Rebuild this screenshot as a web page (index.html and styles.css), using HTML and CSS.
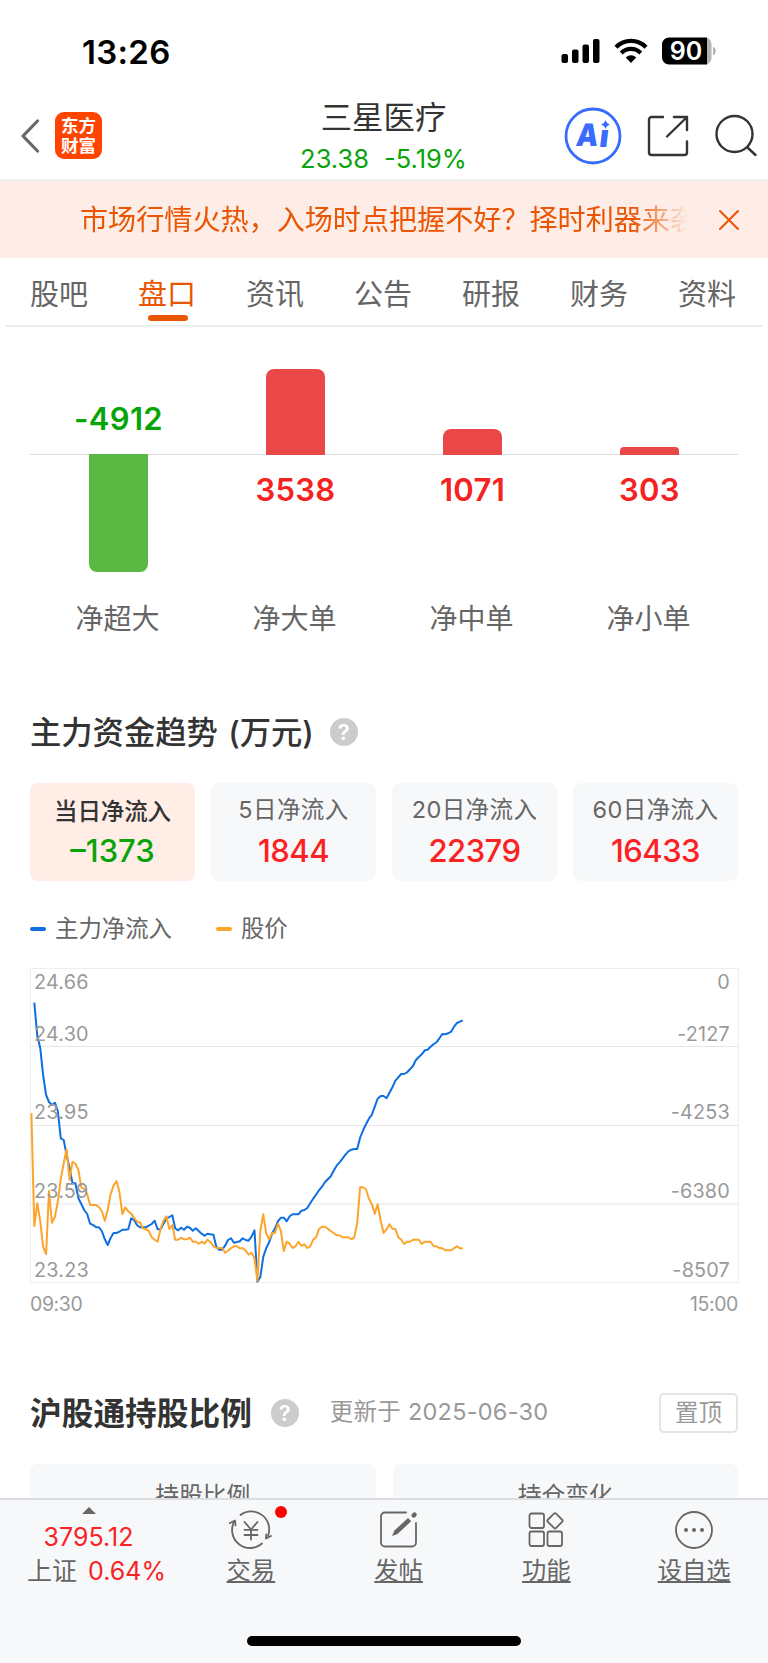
FILE: index.html
```html
<!DOCTYPE html>
<html lang="zh-CN">
  <head>
    <meta charset="UTF-8" />
    <title>三星医疗</title>
    <link rel="stylesheet" href="styles.css" />
  </head>
  <body>
    <div class="statusbar">
      <span class="time">13:26</span>
      <svg class="status-icons" width="156" height="28" viewBox="0 0 156 28">
        <rect x="1.5" y="17" width="6.5" height="9" rx="2" />
        <rect x="12" y="12.5" width="6.5" height="13.5" rx="2" />
        <rect x="22.5" y="7.5" width="6.5" height="18.5" rx="2" />
        <rect x="33" y="2" width="6.5" height="24" rx="2" />
        <path d="M56 10.2a21 21 0 0 1 30 0" fill="none" stroke="#000" stroke-width="4.2" />
        <path d="M61.2 15.9a13.8 13.8 0 0 1 19.6 0" fill="none" stroke="#000" stroke-width="4.2" />
        <path d="M65.8 20.5a7.4 7.4 0 0 1 10.4 0L71 26z" />
        <path d="M109 0.5h38v27h-38a7 7 0 0 1-7-7v-13a7 7 0 0 1 7-7z" />
        <path d="M147 0.5a8 8 0 0 1 4.5 7v13a8 8 0 0 1-4.5 7z" fill="#b3b3b3" />
        <path d="M153 9.5a5 5 0 0 1 0 9z" fill="#b3b3b3" />
        <text class="battery-text" x="126" y="23" text-anchor="middle">90</text>
      </svg>
    </div>

    <header class="header">
      <div class="header-left">
        <svg width="20" height="36" viewBox="0 0 20 36" fill="none" stroke="#666" stroke-width="3.2" stroke-linecap="round" stroke-linejoin="round">
          <path d="M17.5 3L3 18l14.5 15" />
        </svg>
        <div class="logo">东方<br />财富</div>
      </div>
      <div class="stock">
        <div class="stock-name">三星医疗</div>
        <div class="stock-price"><span>23.38</span><span>-5.19%</span></div>
      </div>
      <div class="header-right">
        <svg width="58" height="58" viewBox="0 0 58 58">
          <circle cx="29" cy="29" r="27" fill="none" stroke="#3a6bff" stroke-width="2.8" />
          <g class="ai" transform="translate(5 0) skewX(-7)">
            <text x="11" y="39.5" textLength="22" lengthAdjust="spacingAndGlyphs">A</text>
            <text x="34.5" y="40.5">ı</text>
          </g>
          <path d="M41.5 13q1 3.500 4.500 4.500q-3.500 1-4.500 4.500q-1-3.500-4.500-4.500q3.500-1 4.500-4.500z" fill="#3a6bff" />
        </svg>
        <svg width="42" height="42" viewBox="0 0 42 42" fill="none" stroke="#333" stroke-width="2.4" stroke-linecap="round" stroke-linejoin="round">
          <path d="M16 2H4.500A2.500 2.500 0 0 0 2 4.500v33A2.500 2.500 0 0 0 4.500 40h33a2.500 2.500 0 0 0 2.500-2.500V26.500" />
          <path d="M27 2h13v13M40 2L20 21.500" />
        </svg>
        <svg width="44" height="44" viewBox="0 0 44 44" fill="none" stroke="#333" stroke-width="2.4" stroke-linecap="round">
          <circle cx="20.500" cy="20" r="18" />
          <path d="M34 34l7.500 7" />
        </svg>
      </div>
    </header>

    <div class="notice">
      <div class="notice-text">市场行情火热，入场时点把握不好？择时利器来袭</div>
      <svg width="20" height="20" viewBox="0 0 20 20" stroke="#ea5504" stroke-width="2" stroke-linecap="round">
        <path d="M1 1l18 18M19 1L1 19" />
      </svg>
    </div>

    <nav class="tabs">
      <a>股吧</a>
      <a class="active">盘口</a>
      <a>资讯</a>
      <a>公告</a>
      <a>研报</a>
      <a>财务</a>
      <a>资料</a>
    </nav>

    <main>
      <section class="orders">
        <div class="order green">
          <div class="up"><b>-4912</b></div>
          <div class="down"><i style="height: 118px"></i></div>
          <span>净超大</span>
        </div>
        <div class="order red">
          <div class="up"><i style="height: 86px"></i></div>
          <div class="down"><b>3538</b></div>
          <span>净大单</span>
        </div>
        <div class="order red">
          <div class="up"><i style="height: 26px"></i></div>
          <div class="down"><b>1071</b></div>
          <span>净中单</span>
        </div>
        <div class="order red small">
          <div class="up"><i style="height: 8px"></i></div>
          <div class="down"><b>303</b></div>
          <span>净小单</span>
        </div>
      </section>

      <section class="trend">
        <div class="title-row">
          <h2 class="trend-title">主力资金趋势 (万元)</h2>
          <span class="help">?</span>
        </div>

        <div class="cards">
          <div class="card selected">
            <span>当日净流入</span>
            <b>–1373</b>
          </div>
          <div class="card">
            <span>5日净流入</span>
            <b>1844</b>
          </div>
          <div class="card">
            <span>20日净流入</span>
            <b>22379</b>
          </div>
          <div class="card">
            <span>60日净流入</span>
            <b>16433</b>
          </div>
        </div>

        <div class="legend">
          <span class="flow">主力净流入</span>
          <span class="price">股价</span>
        </div>

        <svg class="chart" width="709" height="315" viewBox="0 0 709 315">
          <rect class="frame" x="0.5" y="0.5" width="708" height="314" />
          <path class="grid" d="M0 78.500h709M0 157.500h709M0 236h709" />
          <polyline id="flowLine" class="line" stroke="#0f6fe0" />
          <polyline id="priceLine" class="line" stroke="#fca42c" />
          <g class="axis">
            <text x="4" y="21">24.66</text>
            <text x="4" y="72.500">24.30</text>
            <text x="4" y="151.200">23.95</text>
            <text x="4" y="230">23.59</text>
            <text x="4" y="308.500">23.23</text>
          </g>
          <g class="axis" text-anchor="end">
            <text x="700" y="21">0</text>
            <text x="700" y="72.500">-2127</text>
            <text x="700" y="151.200">-4253</text>
            <text x="700" y="230">-6380</text>
            <text x="700" y="308.500">-8507</text>
          </g>
        </svg>
        <div class="hours"><span>09:30</span><span>15:00</span></div>
      </section>

      <section class="holding">
        <div class="title-row">
          <h2>沪股通持股比例</h2>
          <span class="help">?</span>
          <span class="updated">更新于 2025-06-30</span>
          <button class="pin">置顶</button>
        </div>
        <div class="panels">
          <div>持股比例</div>
          <div>持仓变化</div>
        </div>
      </section>
    </main>

    <footer class="toolbar">
      <div class="index">
        <i class="arrow"></i>
        <div class="points">3795.12</div>
        <div class="change">上证<em>0.64%</em></div>
      </div>
      <a class="tool">
        <svg width="44" height="40" viewBox="0 0 44 40">
          <path d="M11.500 5a18 18 0 0 1 27.500 21M33 33.500A18 18 0 0 1 5.500 11" />
          <path d="M0.500 13.200l5.500-2.700 0.500 5M42 26l-5 2.500 0.300-4" />
          <path d="M15.500 12l6.500 7.500 6.500-7.500M22 19.500v10M15.500 19.800h13M15.500 25h13" />
        </svg>
        <span class="dot"></span>
        <span>交易</span>
      </a>
      <a class="tool">
        <svg width="44" height="40" viewBox="0 0 44 40">
          <path d="M29 2.500H8a4 4 0 0 0-4 4v26a4 4 0 0 0 4 4h27a4 4 0 0 0 4-4V13" />
          <path class="solid" d="M15 26l2.500-5.500 13.500-12.500 3.200 3.200-13.700 12.800z" />
          <path d="M36.700 5.500l0.800-0.800" stroke-width="4.5" />
        </svg>
        <span>发帖</span>
      </a>
      <a class="tool">
        <svg width="44" height="40" viewBox="0 0 44 40">
          <rect x="5.500" y="3.500" width="14.500" height="14.500" rx="2" />
          <rect x="5.500" y="21.500" width="14.500" height="14.500" rx="2" />
          <rect x="23.500" y="21.500" width="14.500" height="14.500" rx="2" />
          <rect x="25.200" y="5" width="11.600" height="11.600" rx="1.500" transform="rotate(45 31 10.800)" />
        </svg>
        <span>功能</span>
      </a>
      <a class="tool">
        <svg width="44" height="40" viewBox="0 0 44 40">
          <circle cx="22" cy="20" r="18" />
          <g class="solid">
            <circle cx="14" cy="20" r="2" />
            <circle cx="22" cy="20" r="2" />
            <circle cx="30" cy="20" r="2" />
          </g>
        </svg>
        <span>设自选</span>
      </a>
      <div class="home"></div>
    </footer>

    <script>
      // one value per minute, the frame runs from 39 (top) to 984 (bottom)
      const flow = [
        143, 243, 278, 360, 420, 441, 450, 443, 468, 550, 555, 600, 640, 685,
        685, 730, 747, 765, 777, 806, 810, 817, 817, 828, 853, 870, 849, 834,
        834, 830, 824, 824, 823, 790, 795, 811, 817, 817, 817, 812, 807, 797,
        823, 823, 806, 791, 786, 781, 820, 826, 818, 824, 815, 818, 827, 820,
        828, 836, 842, 836, 838, 839, 875, 884, 884, 872, 855, 850, 863, 861,
        859, 850, 855, 857, 845, 826, 980, 966, 905, 880, 862, 836, 820, 799,
        788, 788, 799, 784, 778, 778, 778, 767, 765, 759, 745, 731, 719, 706,
        695, 682, 673, 664, 647, 632, 622, 611, 599, 589, 584, 582, 582, 548,
        526, 508, 491, 479, 455, 431, 423, 423, 430, 413, 397, 377, 367, 357,
        357, 352, 343, 333, 315, 306, 298, 286, 284, 275, 268, 262, 250, 237,
        238, 235, 230, 215, 204, 200, 196,
      ];
      const price = [
        475, 813, 745, 797, 875, 897, 708, 803, 785, 740, 672, 625, 583, 675,
        620, 626, 645, 697, 702, 718, 750, 750, 750, 756, 768, 797, 765, 718,
        692, 678, 712, 777, 757, 769, 776, 788, 801, 802, 820, 823, 828, 847,
        854, 860, 822, 797, 784, 822, 810, 854, 854, 848, 853, 853, 848, 860,
        860, 866, 860, 866, 854, 861, 873, 879, 879, 879, 893, 887, 880, 874,
        874, 880, 880, 887, 899, 893, 910, 977, 828, 778, 835, 853, 834, 834,
        806, 828, 888, 860, 866, 879, 874, 860, 873, 868, 879, 874, 854, 847,
        822, 815, 815, 821, 828, 834, 841, 841, 847, 847, 847, 853, 847, 805,
        697, 697, 703, 731, 748, 776, 748, 797, 834, 823, 808, 821, 822, 847,
        854, 867, 860, 860, 854, 854, 854, 867, 860, 860, 860, 873, 874, 879,
        880, 886, 886, 886, 880, 874, 880, 880,
      ];

      function draw(id, data, start) {
        const points = data.map((v, i) => {
          const x = 1.4 + (i + start) * 2.935;
          const y = (v - 39) / 3;
          return x.toFixed(1) + "," + y.toFixed(1);
        });
        document.getElementById(id).setAttribute("points", points.join(" "));
      }

      draw("flowLine", flow, 1);
      draw("priceLine", price, 0);
    </script>
  </body>
</html>
```
FILE: styles.css
```css
* {
  box-sizing: border-box;
}
body {
  margin: 0;
  width: 768px;
  height: 1663px;
  overflow: hidden;
  display: flex;
  flex-direction: column;
  background: #fff;
  color: #333;
  font-family: Inter, "Noto Sans CJK SC", sans-serif;
}
.statusbar {
  height: 92px;
  padding: 37px 52px 0 82px;
  display: flex;
  justify-content: space-between;
}
.time {
  font-size: 33px;
  font-weight: 600;
  line-height: 30px;
  color: #000;
  letter-spacing: 0.3px;
}
.battery-text {
  font-size: 25px;
  font-weight: 600;
  fill: #fff;
}
.header {
  height: 89px;
  padding: 0 10px 0 20px;
  border-bottom: 2px solid #eee;
  display: grid;
  grid-template-columns: 210px 1fr 210px;
  align-items: center;
}
.header-left {
  display: flex;
  align-items: center;
  gap: 15px;
}
.logo {
  width: 47px;
  height: 47px;
  border-radius: 9px;
  background: #ff4400;
  color: #fff;
  font-size: 17.5px;
  font-weight: 700;
  line-height: 19.5px;
  text-align: center;
  padding-top: 4px;
}
.stock {
  text-align: center;
  padding: 5px 11px 0 0;
}
.stock-name {
  font-size: 31.4px;
  line-height: 42px;
  white-space: nowrap;
}
.stock-price {
  display: flex;
  justify-content: center;
  gap: 15px;
  font-size: 25.5px;
  line-height: 40px;
  color: #07a407;
}
.header-right {
  display: flex;
  align-items: center;
  justify-content: flex-end;
  gap: 25px;
}
.ai {
  font-size: 31px;
  font-weight: 900;
  fill: #3a6bff;
}
.notice {
  height: 77px;
  flex: none;
  padding: 0 29px 0 80px;
  background: #fdede6;
  display: flex;
  align-items: center;
  justify-content: space-between;
}
.notice-text {
  width: 608px;
  font-size: 28.1px;
  line-height: 40px;
  color: #ea5504;
  white-space: nowrap;
  overflow: hidden;
  -webkit-mask-image: linear-gradient(to right, #000 91%, transparent);
  mask-image: linear-gradient(to right, #000 91%, transparent);
}
.tabs {
  height: 69px;
  flex: none;
  margin: 0 6px;
  border-bottom: 2px solid #eee;
  display: grid;
  grid-template-columns: repeat(7, 1fr);
}
.tabs a {
  padding-right: 2px;
  font-size: 29px;
  line-height: 73px;
  height: 67px;
  color: #666;
  text-align: center;
}
.tabs .active {
  position: relative;
  color: #ea5504;
}
.tabs .active::after {
  content: "";
  position: absolute;
  left: 34px;
  bottom: 4px;
  width: 40px;
  height: 6px;
  border-radius: 3px;
  background: #ea5504;
}
main {
  height: 1171px;
  flex: none;
  padding: 0 30px;
  overflow: hidden;
}
.orders {
  display: grid;
  grid-template-columns: repeat(4, 1fr);
  text-align: center;
}
.order .up {
  height: 128px;
  border-bottom: 1px solid #dcdddf;
  display: flex;
  flex-direction: column;
  justify-content: flex-end;
  align-items: center;
}
.order .down {
  height: 140px;
  display: flex;
  flex-direction: column;
  align-items: center;
}
.order i {
  width: 59px;
}
.green i {
  margin-top: -1px;
  background: #5bb843;
  border-radius: 0 0 8px 8px;
}
.red i {
  background: #ea4848;
  border-radius: 8px 8px 0 0;
  margin-bottom: -1px;
}
.small i {
  border-radius: 4px 4px 0 0;
}
.order b {
  font-size: 31px;
  font-weight: 600;
  line-height: 40px;
  letter-spacing: 0.3px;
}
.green b {
  color: #07a407;
  margin-bottom: 15px;
}
.red b {
  color: #f52222;
  margin-top: 15px;
}
.order span {
  display: block;
  padding-right: 2px;
  font-size: 28px;
  line-height: 48px;
  color: #666;
}
.title-row {
  display: flex;
  align-items: center;
  height: 48px;
}
h2 {
  margin: 0;
  font-size: 31.7px;
  font-weight: 700;
  line-height: 48px;
  padding-top: 2px;
}
.trend-title {
  font-size: 31.3px;
  font-weight: 500;
  word-spacing: 2px;
}
.help {
  width: 28px;
  height: 28px;
  margin-left: 16px;
  border-radius: 50%;
  background: #ccc;
  color: #fff;
  font-size: 22px;
  font-weight: 600;
  line-height: 28px;
  text-align: center;
}
.trend {
  padding-top: 65px;
}
.cards {
  margin-top: 27px;
  display: grid;
  grid-template-columns: repeat(4, 1fr);
  gap: 16px;
}
.card {
  height: 98px;
  border-radius: 8px;
  background: #f7f8fa;
  display: flex;
  flex-direction: column;
  align-items: center;
  padding-top: 11px;
}
.card span {
  font-size: 23.5px;
  line-height: 32px;
  letter-spacing: 0.4px;
  color: #666;
}
.card b {
  font-size: 31px;
  font-weight: 500;
  line-height: 50px;
  letter-spacing: -0.5px;
  color: #fa2222;
}
.card.selected {
  background: #ffede6;
}
.card.selected span {
  color: #333;
  font-weight: 500;
  letter-spacing: -0.1px;
  padding-top: 2px;
  margin-bottom: -2px;
}
.card.selected b {
  color: #07a407;
  letter-spacing: 0;
}
.legend {
  height: 87px;
  display: flex;
  align-items: center;
  gap: 44px;
  font-size: 23.4px;
  line-height: 40px;
  color: #666;
  padding-top: 9px;
}
.legend span {
  display: flex;
  align-items: center;
}
.legend span::before {
  content: "";
  width: 16px;
  height: 4px;
  margin-right: 9px;
  border-radius: 2px;
  background: #0f6fe0;
}
.legend .price::before {
  background: #fca42c;
}
.chart {
  display: block;
}
.frame,
.grid {
  fill: none;
  stroke: #e6e6e6;
}
.frame {
  stroke: #eee;
}
.line {
  fill: none;
  stroke-width: 2;
  stroke-linejoin: round;
}
.axis {
  font-size: 19.8px;
  letter-spacing: 0.2px;
  fill: #999;
}
.hours {
  display: flex;
  justify-content: space-between;
  font-size: 19.5px;
  line-height: 42px;
  height: 40px;
  letter-spacing: -0.4px;
  color: #999;
}
.holding {
  padding-top: 66px;
}
.holding .help {
  margin-left: 19px;
}
.updated {
  margin-left: 31px;
  font-size: 23.5px;
  letter-spacing: 0.25px;
  line-height: 36px;
  padding-bottom: 2px;
  color: #999;
}
.pin {
  width: 79px;
  height: 40px;
  margin-left: auto;
  padding: 0;
  border: 2px solid #e3e4e8;
  border-radius: 5px;
  background: #fff;
  color: #999;
  font-family: inherit;
  font-size: 23.5px;
  line-height: 34px;
}
.panels {
  margin-top: 27px;
  display: grid;
  grid-template-columns: 1fr 1fr;
  gap: 17px;
}
.panels div {
  height: 80px;
  padding-top: 15px;
  border-radius: 8px;
  background: #f7f8fa;
  color: #666;
  font-size: 23.8px;
  line-height: 34px;
  text-align: center;
}
.toolbar {
  position: relative;
  height: 165px;
  flex: none;
  border-top: 2px solid #dcdde1;
  background: #f7f8fa;
  display: grid;
  grid-template-columns: 177px repeat(4, 1fr);
  color: #666;
}
.index {
  display: flex;
  flex-direction: column;
  align-items: center;
  padding-top: 7px;
}
.arrow {
  border: 7px solid transparent;
  border-top: 0;
  border-bottom-color: #666;
}
.points {
  margin-top: 5px;
  font-size: 25px;
  line-height: 36px;
  color: #fa2222;
}
.change {
  margin-left: 16px;
  font-size: 25px;
  line-height: 33px;
}
.change em {
  margin-left: 11px;
  font-style: normal;
  color: #fa2222;
}
.tool {
  position: relative;
  display: flex;
  flex-direction: column;
  align-items: center;
  padding-top: 10px;
}
.tool svg {
  fill: none;
  stroke: #666;
  stroke-width: 1.8;
  stroke-linecap: round;
  stroke-linejoin: round;
}
.tool .solid {
  fill: #666;
  stroke: none;
}
.tool span {
  font-size: 24.3px;
  line-height: 40px;
  text-decoration: underline;
  text-decoration-thickness: 1.5px;
  text-underline-offset: 2px;
}
.tool .dot {
  position: absolute;
  top: 6px;
  left: 98px;
  width: 12px;
  height: 12px;
  border-radius: 50%;
  background: #f00;
}
.home {
  position: absolute;
  left: 247px;
  bottom: 17px;
  width: 274px;
  height: 10px;
  border-radius: 5px;
  background: #000;
}
```
